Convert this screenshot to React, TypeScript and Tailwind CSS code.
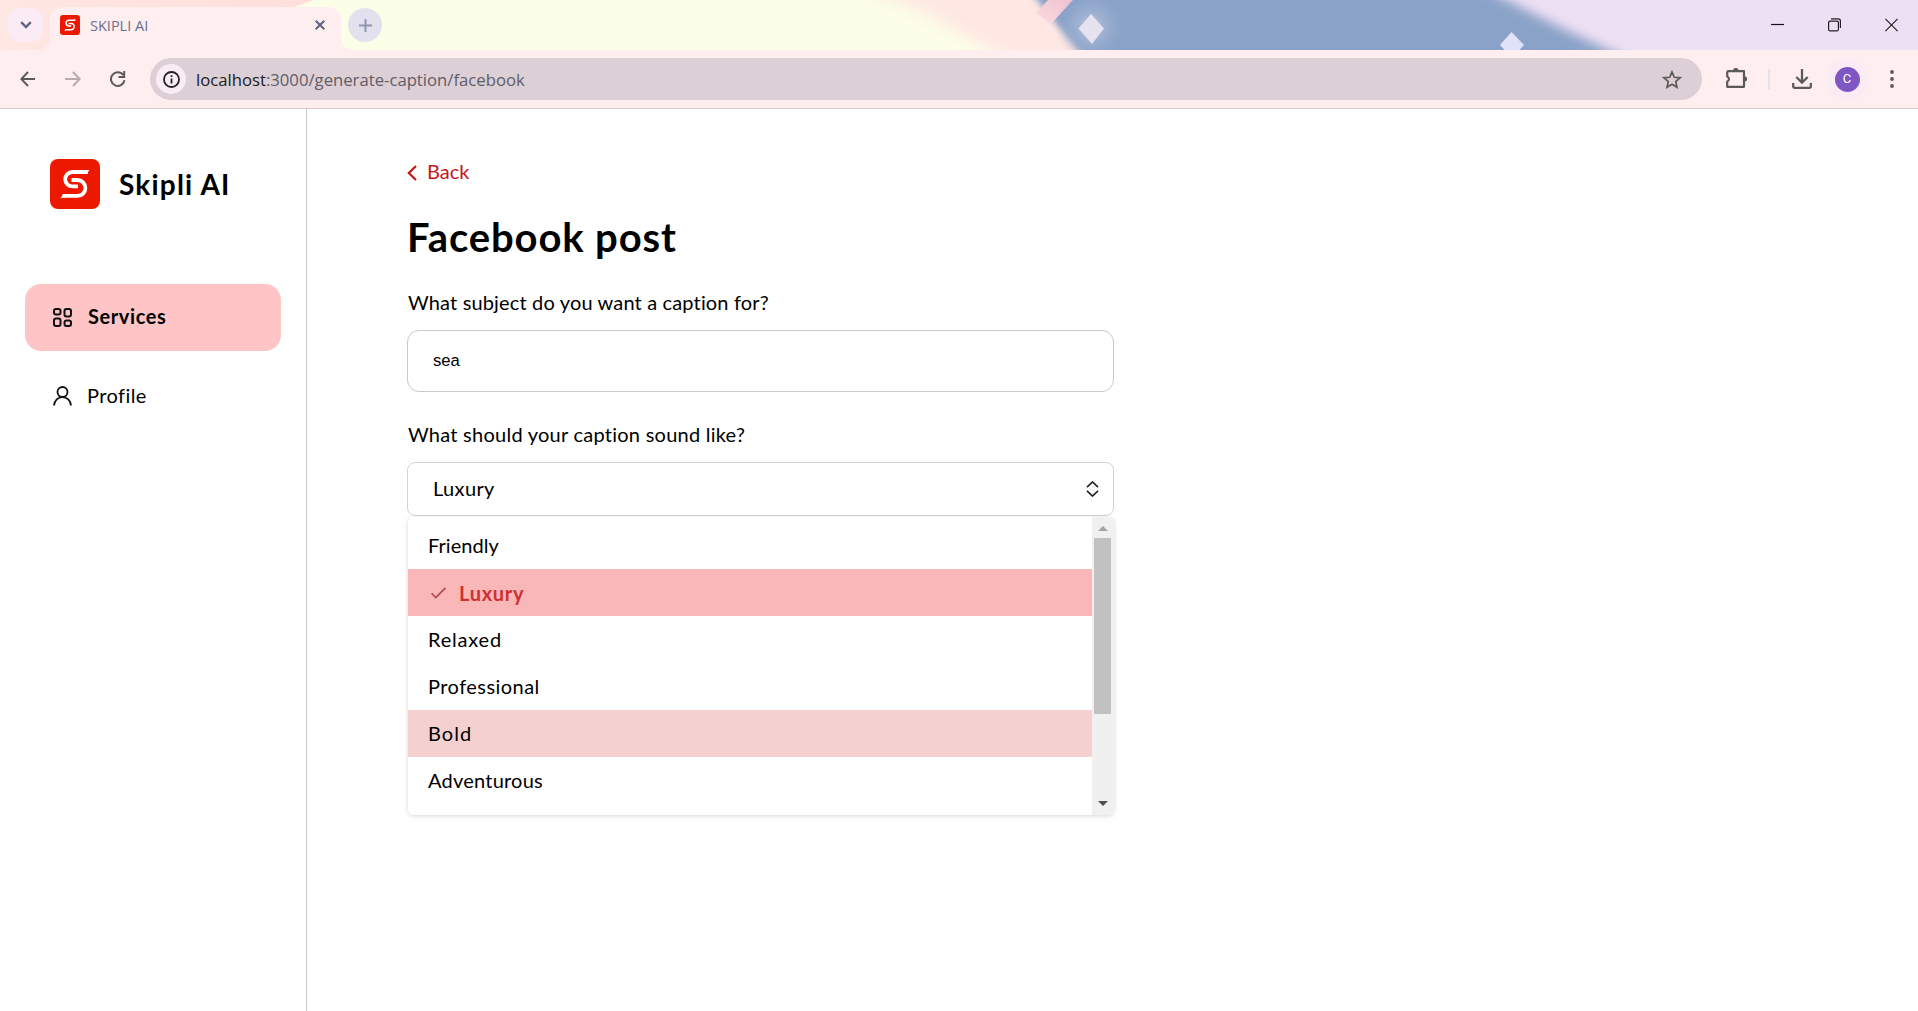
import React from 'react';

function SkipliLogo({ className }: { className: string }) {
  return (
    <svg viewBox="0 0 50 50" className={className} aria-label="Skipli">
      <rect width="50" height="50" rx="8" fill="#ec1800" />
      <g fill="none" stroke="#fff" strokeWidth="3.8" strokeLinejoin="round">
        <path d="M38 13H22.5a7.3 7.3 0 0 0-7.3 7.2 7.3 7.3 0 0 0 7.3 7.2H28" strokeLinecap="butt" />
        <path d="M21.500 21H27.500a7.900 7.900 0 0 1 7.900 7.900 7.900 7.900 0 0 1-7.900 8H12.500" />
      </g>
      <path d="M39.500 11H35v4h1.500zM10.500 39H15v-4h-1.200z" fill="#fff" />
    </svg>
  );
}

/* Decorative browser theme painted behind the tab strip */
function ThemeArt() {
  return (
    <svg className="absolute inset-0 h-[50px] w-full" viewBox="0 0 1918 50" preserveAspectRatio="none" aria-hidden="true">
      <defs>
        <filter id="soft" x="-10%" y="-100%" width="120%" height="300%">
          <feGaussianBlur stdDeviation="9" />
        </filter>
        <filter id="soft2" x="-10%" y="-100%" width="120%" height="300%">
          <feGaussianBlur stdDeviation="6" />
        </filter>
        <filter id="soft3" x="-20%" y="-50%" width="140%" height="200%">
          <feGaussianBlur stdDeviation="3" />
        </filter>
        <linearGradient id="peach">
          <stop offset="0" stopColor="#ffe7e3" />
          <stop offset="1" stopColor="#ffdedb" />
        </linearGradient>
        <linearGradient id="ribbon" x1="1" y1="0" x2="0" y2="1">
          <stop offset="0" stopColor="#eec2d3" />
          <stop offset="1" stopColor="#fddbdb" />
        </linearGradient>
        <radialGradient id="glow">
          <stop offset="0" stopColor="#cdd3e8" stopOpacity=".8" />
          <stop offset="1" stopColor="#8aa2c8" stopOpacity="0" />
        </radialGradient>
      </defs>
      <rect width="1918" height="50" fill="#fcffe7" />
      <path d="M0 0H314L280 12 200 50H0z" fill="url(#peach)" />
      <path d="M800 -40L925 14 1045 80H1300V-40z" fill="#ffe7e4" filter="url(#soft)" />
      <path d="M1014 -30L1047 13 1071 42 1100 80H1700V-30z" fill="#8aa2c8" filter="url(#soft3)" />
      <path d="M1448 -30L1562 28 1672 80H1960V-30z" fill="#eee0f4" filter="url(#soft2)" />
      <path d="M1048 0H1073L1051 24 1036 13z" fill="url(#ribbon)" />
      <circle cx="1091" cy="27" r="36" fill="url(#glow)" />
      <path d="M1091 14L1104 28.500 1092 44 1078.500 28.500z" fill="#e7e2f0" />
      <path d="M1511.500 32L1524 45 1512 58 1500 45z" fill="#e0e2fa" />
    </svg>
  );
}

function TabStrip() {
  return (
    <div className="relative flex h-[50px] shrink-0 items-end overflow-hidden">
      <ThemeArt />
      <button className="relative mb-2 ml-2 flex h-[34px] w-[35px] items-center justify-center rounded-xl bg-[#fbebf5]">
        <svg width="12" height="8" viewBox="0 0 12 8" fill="none" stroke="#606580" strokeWidth="2.400">
          <path d="M1.200 1.200L6 6l4.800-4.800" />
        </svg>
      </button>
      <div className="relative ml-[7px] flex h-[43px] w-[291px] items-center rounded-t-xl bg-[#ffeef0] pl-2.5">
        <svg className="absolute -left-3 bottom-0" width="12" height="12" viewBox="0 0 12 12">
          <path d="M12 0v12H0A12 12 0 0 0 12 0z" fill="#ffeef0" />
        </svg>
        <svg className="absolute -right-3 bottom-0" width="12" height="12" viewBox="0 0 12 12">
          <path d="M0 0v12h12A12 12 0 0 1 0 0z" fill="#ffeef0" />
        </svg>
        <SkipliLogo className="mb-[7px] h-5 w-5" />
        <span className="mb-[6px] ml-2.5 font-['Open_Sans',sans-serif] text-[14.500px] leading-5 text-[#6a7090]">SKIPLI AI</span>
        <svg className="mr-4 mb-[7px] ml-auto" width="10" height="10" viewBox="0 0 10 10" stroke="#5f6480" strokeWidth="2">
          <path d="M.7.700l8.600 8.600M9.300.700L.7 9.300" />
        </svg>
      </div>
      <button className="relative mb-2 ml-[7px] flex size-[34px] items-center justify-center rounded-full bg-[#e4e1ee]">
        <svg width="13" height="13" viewBox="0 0 13 13" stroke="#9096b2" strokeWidth="2">
          <path d="M6.500 0v13M0 6.500h13" />
        </svg>
      </button>
      <div className="relative mr-5 mb-[18px] ml-auto flex items-center gap-[44px]">
        <svg width="13" height="14" viewBox="0 0 13 14" stroke="#111" strokeWidth="1.200">
          <path d="M0 6.500h13" />
        </svg>
        <svg width="13" height="14" viewBox="0 0 13 14" fill="none" stroke="#222" strokeWidth="1.200">
          <rect x=".6" y="3.100" width="9.800" height="9.800" rx="1.500" />
          <path d="M3 .8h7.200a2.200 2.200 0 0 1 2.200 2.200v7" />
        </svg>
        <svg width="13" height="14" viewBox="0 0 13 14" stroke="#222" strokeWidth="1.200">
          <path d="M.4.900l12.200 12.200M12.600.900L.4 13.100" />
        </svg>
      </div>
    </div>
  );
}

function Toolbar() {
  return (
    <div className="flex h-[59px] shrink-0 items-center border-b border-[#d8c8d0] bg-[#ffeef0]">
      <svg className="ml-5" width="16" height="16" viewBox="0 0 16 16" fill="none" stroke="#5c5a59" strokeWidth="2">
        <path d="M15 8H1.500M8 1L1.300 8 8 15" />
      </svg>
      <svg className="ml-[29px]" width="16" height="16" viewBox="0 0 16 16" fill="none" stroke="#b9abad" strokeWidth="2">
        <path d="M0 8h14.500M8 1l6.700 7L8 15" />
      </svg>
      <svg className="ml-[29px]" width="16" height="16" viewBox="0 0 16 16" fill="none" stroke="#5c5a59" strokeWidth="2">
        <path d="M14.500 9.200A6.800 6.800 0 1 1 13.200 4M14.200 0v6H8.500" />
      </svg>
      <div className="ml-[24px] flex h-[42px] w-[1552px] items-center rounded-full bg-[#dccfd6] pl-1.5">
        <span className="flex size-[30px] items-center justify-center rounded-full bg-[#fbebf5]">
          <svg width="17" height="17" viewBox="0 0 17 17" fill="none" stroke="#222" strokeWidth="1.800">
            <circle cx="8.500" cy="8.500" r="7.500" />
            <path d="M8.500 7.500v5M8.500 4.300v1.800" />
          </svg>
        </span>
        <span className="mt-px ml-2.5 font-['Open_Sans',sans-serif] text-[16.700px] leading-6 text-[#605d66]">
          <span className="text-[#202024]">localhost</span>:3000/generate-caption/facebook
        </span>
        <svg className="mr-[20px] ml-auto" width="20" height="19" viewBox="0 0 20 19" fill="none" stroke="#5c5a59" strokeWidth="1.700">
          <path d="M10 2l2.300 5.300 5.800.5-4.400 3.800 1.300 5.700-5-3-5 3 1.300-5.700L1.900 7.800l5.800-.5z" />
        </svg>
      </div>
      <svg className="mb-0.5 ml-[24px]" width="21" height="21" viewBox="0 0 21 21">
        <path d="M1.200 3.200H18v5.300M18 13.500v5.300H1.200v-5.200a2.800 2.800 0 0 0 0-5.200V3.200M18 8v6" fill="none" stroke="#5c5a59" strokeWidth="2.200" strokeLinejoin="round" />
        <path d="M7 2.700a2.800 2.800 0 0 1 5.600 0zM18.400 8.300a2.700 2.700 0 0 1 0 5.400z" fill="#5c5a59" />
      </svg>
      <span className="ml-[21px] h-5 w-0.5 bg-[#e2e1f1]" />
      <svg className="ml-[22px]" width="20" height="20" viewBox="0 0 20 20" fill="none" stroke="#5c5a59" strokeWidth="2.300">
        <path d="M10 0v13.500M4.300 8L10 13.600 15.700 8M1.200 14v3.600a1.200 1.200 0 0 0 1.200 1.200h15.200a1.200 1.200 0 0 0 1.200-1.200V14" />
      </svg>
      <span className="ml-[14px] flex size-[42px] items-center justify-center rounded-full bg-[#fbebf5]">
        <span className="flex size-[25px] items-center justify-center rounded-full bg-[#7e57c2] font-[Roboto,sans-serif] text-[13px] text-white">C</span>
      </span>
      <svg className="ml-[22px]" width="4" height="18" viewBox="0 0 4 18" fill="#5c5a59">
        <circle cx="2" cy="2" r="1.900" />
        <circle cx="2" cy="9" r="1.900" />
        <circle cx="2" cy="16" r="1.900" />
      </svg>
    </div>
  );
}

function Sidebar() {
  return (
    <aside className="flex w-[307px] shrink-0 flex-col border-r border-[#c9c9c9]">
      <div className="mt-[50px] ml-[50px] flex h-[50px] items-center">
        <SkipliLogo className="size-[50px]" />
        <span className="mb-px ml-[19px] text-[28px] font-bold tracking-[1.190px]">Skipli AI</span>
      </div>
      <nav className="mt-[75px] flex flex-col px-[25px]">
        <a className="flex h-[67px] items-center rounded-2xl bg-[#ffc5c6] pl-[28px]">
          <svg width="19" height="19" viewBox="0 0 19 19" fill="none" stroke="#111" strokeWidth="2">
            <rect x="1" y="1" width="6.500" height="5.500" rx="2" />
            <rect x="11.500" y="1" width="6.500" height="7.500" rx="2" />
            <rect x="1" y="10.500" width="6.500" height="7.500" rx="2" />
            <rect x="11.500" y="12.500" width="6.500" height="5.500" rx="2" />
          </svg>
          <span className="mb-[3px] ml-4 text-xl font-bold tracking-[0.590px]">Services</span>
        </a>
        <a className="mt-3 flex h-[67px] items-center pl-[28px]">
          <svg className="mb-0.5" width="19" height="20" viewBox="0 0 19 20" fill="none" stroke="#111" strokeWidth="1.800">
            <circle cx="9.500" cy="6" r="5" />
            <path d="M1 19.500c.5-5 4-8.300 8.500-8.300s8 3.300 8.500 8.300" />
          </svg>
          <span className="mb-[3px] ml-[15px] text-xl tracking-[0.420px]">Profile</span>
        </a>
      </nav>
    </aside>
  );
}

function Dropdown() {
  return (
    <div className="absolute top-[55px] left-px flex h-[298px] w-[706px] overflow-hidden rounded-md bg-white shadow-[0_1px_5px_rgba(0,0,0,0.160)]">
      <ul className="flex-1 pt-[5px] text-xl leading-[46px]">
        <li className="h-[47px] pl-5 tracking-[0.040px]">Friendly</li>
        <li className="flex h-[47px] items-center bg-[#fab7b8] pl-[23px] font-bold text-[#cc3233]">
          <svg width="15" height="12" viewBox="0 0 15 12" fill="none" stroke="#b0474a" strokeWidth="1.600">
            <path d="M.6 6.300l4.200 4.200L14.400.9" />
          </svg>
          <span className="ml-[13px] tracking-[0.720px]">Luxury</span>
        </li>
        <li className="h-[47px] pl-5 tracking-[0.800px]">Relaxed</li>
        <li className="h-[47px] pl-5 tracking-[0.450px]">Professional</li>
        <li className="h-[47px] bg-[#f4d0d0] pl-5 tracking-[1.070px]">Bold</li>
        <li className="h-[47px] pl-5 tracking-[0.220px]">Adventurous</li>
      </ul>
      <div className="flex w-[22px] flex-col items-center bg-[#f0f0f0] pr-px">
        <svg className="mt-[9px]" width="10" height="5" viewBox="0 0 10 5">
          <path d="M5 0l5 5H0z" fill="#a3a3a3" />
        </svg>
        <div className="mt-[7px] h-[176px] w-[17px] bg-[#c1c1c1]" />
        <svg className="mt-auto mb-[9px]" width="10" height="5" viewBox="0 0 10 5">
          <path d="M5 5L0 0h10z" fill="#505050" />
        </svg>
      </div>
    </div>
  );
}

export default function App() {
  return (
    <div className="flex h-screen flex-col overflow-hidden bg-white font-[Lato,sans-serif] text-black">
      <TabStrip />
      <Toolbar />
      <div className="flex flex-1">
        <Sidebar />
        <main className="ml-[100px] w-[707px] pt-12">
          <a className="flex h-7 items-center text-xl text-[#c4161c]">
            <svg className="mt-[3px]" width="10" height="16" viewBox="0 0 10 16" fill="none" stroke="#c4161c" strokeWidth="2.200">
              <path d="M9 1L1.800 8 9 15" />
            </svg>
            <span className="ml-2.5">Back</span>
          </a>
          <h1 className="mt-[28px] text-[40px] leading-[48px] font-bold tracking-[0.870px]">Facebook post</h1>
          <label className="mt-[27px] block pl-px text-xl tracking-[0.155px]">What subject do you want a caption for?</label>
          <div className="mt-3.5 flex h-[62px] items-center rounded-xl border border-[#c9c9c9] pb-0.5 pl-[25px] font-['Liberation_Sans',sans-serif] text-[16.670px]">
            sea
          </div>
          <label className="mt-7 block pl-px text-xl tracking-[0.250px]">What should your caption sound like?</label>
          <div className="relative mt-3.5">
            <button className="flex h-[54px] w-full items-center justify-between rounded-lg border border-[#d1d5db] pr-[14px] pl-[25px] text-xl tracking-[0.360px]">
              <span className="pb-[3px]">Luxury</span>
              <svg width="13" height="16" viewBox="0 0 13 16" fill="none" stroke="#222" strokeWidth="1.700">
                <path d="M1 6.200L6.500 1 12 6.200M1 9.800L6.500 15 12 9.800" />
              </svg>
            </button>
            <Dropdown />
          </div>
        </main>
      </div>
    </div>
  );
}
